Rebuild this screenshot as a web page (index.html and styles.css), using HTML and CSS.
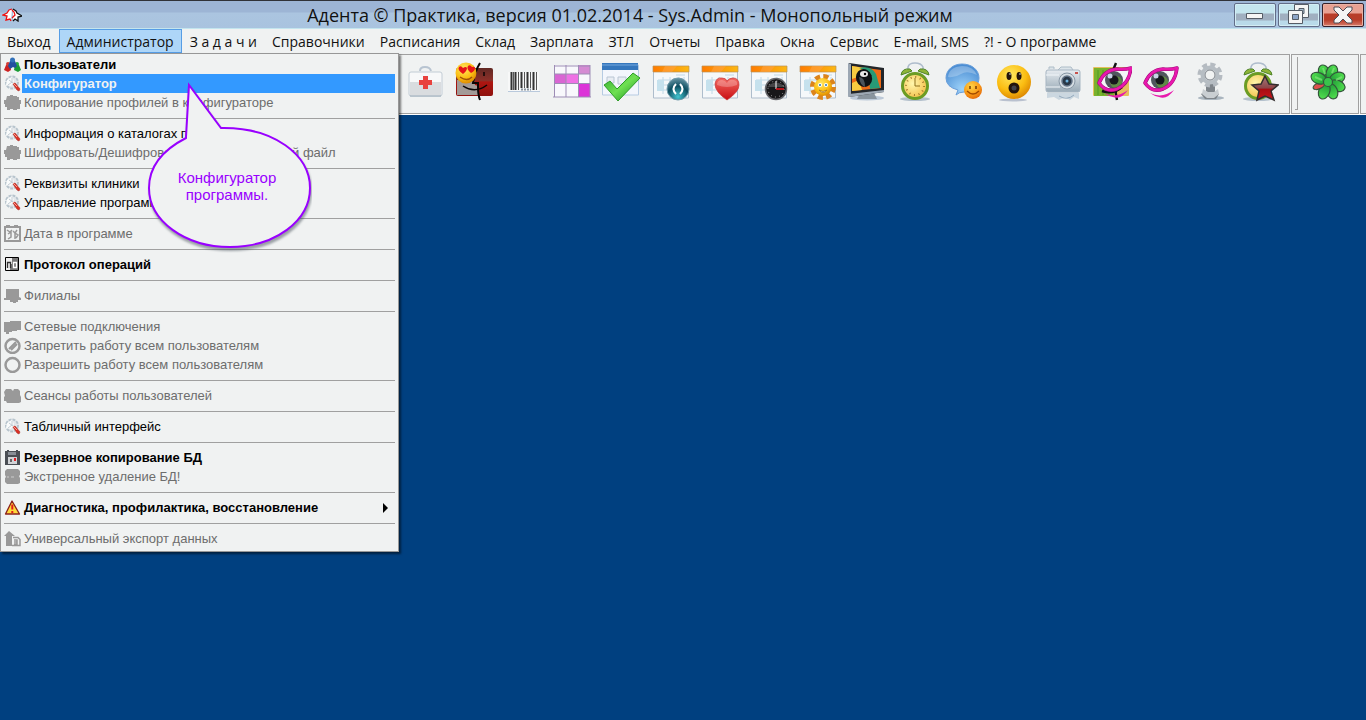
FILE: index.html
```html
<!DOCTYPE html>
<html lang="ru">
<head>
    <meta charset="UTF-8">
    <meta name="viewport" content="width=device-width, initial-scale=1.0">
    <title>Адента © Практика</title>
    <link rel="stylesheet" href="styles.css">
</head>
<body>
    <svg class="defs" aria-hidden="true">
        <defs>
            <radialGradient id="yellow" cx=".4" cy=".3" r=".75"><stop offset="0" stop-color="#ffe860"/><stop offset=".6" stop-color="#fbbd12"/><stop offset="1" stop-color="#d98200"/></radialGradient>
            <radialGradient id="amber" cx=".4" cy=".3" r=".75"><stop offset="0" stop-color="#ffd445"/><stop offset=".6" stop-color="#f99a18"/><stop offset="1" stop-color="#e06408"/></radialGradient>
            <linearGradient id="orange"><stop offset="0" stop-color="#ff7b00"/><stop offset="1" stop-color="#fcb813"/></linearGradient>
            <linearGradient id="silver" x2="0" y2="1"><stop offset="0" stop-color="#e6ebf0"/><stop offset="1" stop-color="#98a9b5"/></linearGradient>
            <linearGradient id="red" x2="0" y2="1"><stop offset="0" stop-color="#f46a62"/><stop offset="1" stop-color="#c80d12"/></linearGradient>
            <linearGradient id="darkred" x2="0" y2="1"><stop offset="0" stop-color="#612823"/><stop offset=".45" stop-color="#8d3029"/><stop offset=".5" stop-color="#ae1510"/><stop offset="1" stop-color="#8f120e"/></linearGradient>
            <linearGradient id="star" x2="0" y2="1"><stop offset="0" stop-color="#a5797b"/><stop offset=".5" stop-color="#8d4548"/><stop offset=".55" stop-color="#a80d12"/><stop offset="1" stop-color="#c8141a"/></linearGradient>
            <linearGradient id="green" x2="1" y2="1"><stop offset="0" stop-color="#2fa82b"/><stop offset=".5" stop-color="#6fe052"/><stop offset="1" stop-color="#128c18"/></linearGradient>
            <linearGradient id="petal" x2="0" y2="1"><stop offset="0" stop-color="#52e04f"/><stop offset="1" stop-color="#1d9a36"/></linearGradient>
            <radialGradient id="dial" cx=".4" cy=".4" r=".7"><stop offset="0" stop-color="#fff7ad"/><stop offset="1" stop-color="#f2b93c"/></radialGradient>
            <radialGradient id="blue" cx=".5" cy=".8" r=".9"><stop offset="0" stop-color="#9fd3f9"/><stop offset="1" stop-color="#3a80cc"/></radialGradient>
            <radialGradient id="teal" cx=".5" cy=".85" r=".8"><stop offset="0" stop-color="#43c4cf"/><stop offset=".6" stop-color="#0d4e61"/><stop offset="1" stop-color="#5d8c9c"/></radialGradient>
        </defs>
        <symbol id="wrench" viewBox="0 0 17 17">
            <circle cx="8" cy="7.500" r="6" fill="#e3e7ea" stroke="#b7c4cd" stroke-width="2" stroke-dasharray="3 1"/>
            <path d="M3 5l5-3 2 4-3 5-5-1z" fill="#f9fbfb"/>
            <path d="M5 5l4 3M8 3v5M4 10l4-3" stroke="#c3ccd3" fill="none"/>
            <path d="M9 9l2-1 5 6-1 2-2-1z" fill="#dc3024" stroke="#a72a23" stroke-width=".6"/>
            <path d="M9 8l4 4" stroke="#ff9d8d"/>
        </symbol>
        <symbol id="blob" viewBox="0 0 17 17"><path d="M3 2h3V1h3v1h4v1h2v3h2v4h-1v5h-3v1H9v-1H6v1H3v-3H1v-3H0V6h2z" fill="#999"/></symbol>
        <symbol id="calendar" viewBox="0 0 41 41">
            <path d="M3.500 5v31h35V5" fill="#f5f8fa" stroke="#aebdcc"/>
            <path d="M8 18h13M8 23h13M8 28h13M13 15v17M20 15v17M26 13h9M29 15v13M34 15v13" stroke="#c0d8e6" fill="none"/>
            <path d="M7 18h7v11H7z" fill="#c5e1ed"/>
            <path d="M3 4h36v6H3z" fill="url(#orange)" stroke="#b9925a" stroke-width=".7"/>
            <path d="M15 4h12l-5 6H12z" fill="#ffa34b" opacity=".5"/>
        </symbol>
        <symbol id="alarm" viewBox="0 0 41 41">
            <ellipse cx="20" cy="37" rx="15" ry="2" fill="#b4c1cd"/>
            <path d="M13 8V5q1-4 7-4t8 4v3" fill="none" stroke="#aebccc" stroke-width="1.500"/>
            <path d="M6 13q1-7 9-6l2 2zM34 13q-1-7-9-6l-2 2z" fill="#8eb437" stroke="#4e8428"/>
            <circle cx="20" cy="24" r="12.500" fill="url(#dial)" stroke="#6b9c24" stroke-width="3"/>
        </symbol>
        <symbol id="eye" viewBox="0 0 41 41">
            <path d="M5 21Q10 9 24 8q7 1 13-2-2 16-15 21Q12 31 5 21z" fill="#f4f4f7"/>
            <circle cx="20" cy="18" r="9" fill="#50565e"/>
            <circle cx="22" cy="20" r="6" fill="#5f8a45"/>
            <circle cx="20" cy="18" r="4.500" fill="#15181c"/>
            <circle cx="16" cy="14" r="2.500" fill="#c9d2e8"/>
            <path d="M5 21Q10 8 23 7q7 1 14-1-2 16-14 21Q12 31 5 21z" fill="none" stroke="#a00778" stroke-width="3.500" stroke-linejoin="round"/>
            <path d="M5 21Q10 8 23 7q7 1 14-1-2 16-14 21Q12 31 5 21z" fill="none" stroke="#e818ad" stroke-width="2.500" stroke-linejoin="round"/>
            <path d="M10 31q12 6 24-3-7 10-15 7-5-1-9-4z" fill="#e71aac"/>
        </symbol>
    </svg>

    <header class="titlebar">
        <svg class="logo" viewBox="0 0 20 14" aria-hidden="true">
            <path d="M10 1L7 2 5 5 1 7l4 1-1 4 4-1 1 2" fill="#fff" stroke="#e11" stroke-width="1.300"/>
            <path d="M11 1l3 2 1 2 5 3-4 1v4l-3-2-2 2" fill="#fff" stroke="#111" stroke-width="1.300"/>
            <path d="M10 2l2 2 1 3-3 3" fill="none" stroke="#e11" stroke-width="1.300"/>
        </svg>
        <h1>Адента © Практика, версия 01.02.2014 - Sys.Admin - Монопольный режим</h1>
        <div class="window-buttons">
            <button aria-label="Свернуть"><svg viewBox="0 0 40 22"><path d="M11.500 9.500h16v5h-16z" fill="#f5f5f5" stroke="#555c66"/></svg></button>
            <button aria-label="Восстановить"><svg viewBox="0 0 40 22"><path d="M15.500 .500h14v13h-14z" fill="#f5f5f5" stroke="#555c66"/><path d="M20 4.500h5v5h-5z" fill="#a7bdd0" stroke="#555c66"/><path d="M9.500 6.500h14v13h-14z" fill="#f5f5f5" stroke="#555c66"/><path d="M13.500 10.500h6v5h-6z" fill="#8ea6c8" stroke="#555c66"/></svg></button>
            <button class="close" aria-label="Закрыть"><svg viewBox="0 0 40 22"><path d="M11 3h5l4 4 4-4h5v3l-5 5 5 5v3h-5l-4-4-4 4h-5v-3l5-5-5-5z" fill="#f5f5f5" stroke="#514c55"/></svg></button>
        </div>
    </header>

    <nav class="menubar">
        <button>Выход</button>
        <button class="active" aria-expanded="true">Администратор</button>
        <button>З а д а ч и</button>
        <button>Справочники</button>
        <button>Расписания</button>
        <button>Склад</button>
        <button>Зарплата</button>
        <button>ЗТЛ</button>
        <button>Отчеты</button>
        <button>Правка</button>
        <button>Окна</button>
        <button>Сервис</button>
        <button>E-mail, SMS</button>
        <button>?! - О программе</button>

        <div class="dropdown">
            <ul>
                <li><button class="bold"><svg viewBox="0 0 17 17"><path d="M0 14l2-5h4l1 5-3 2z" fill="#c22"/><circle cx="4" cy="8" r="2" fill="#d43c35"/><path d="M10 14l1-5h4l2 5-3 2z" fill="#1a9b35"/><circle cx="13" cy="8" r="2" fill="#27a943"/><path d="M4 10l2-5h5l2 5-2 2-2-1-3 2z" fill="#234f9f"/><circle cx="8.500" cy="4" r="2.500" fill="#3271b9"/></svg><span>Пользователи</span></button></li>
                <li><button class="bold selected"><svg><use href="#wrench"/></svg><span>Конфигуратор</span></button></li>
                <li><button disabled><svg><use href="#blob"/></svg><span>Копирование профилей в конфигураторе</span></button></li>
            </ul>
            <ul>
                <li><button><svg><use href="#wrench"/></svg><span>Информация о каталогах программы</span></button></li>
                <li><button disabled><svg><use href="#blob"/></svg><span>Шифровать/Дешифровать любой выбранный файл</span></button></li>
            </ul>
            <ul>
                <li><button><svg><use href="#wrench"/></svg><span>Реквизиты клиники</span></button></li>
                <li><button><svg><use href="#wrench"/></svg><span>Управление программой</span></button></li>
            </ul>
            <ul>
                <li><button disabled><svg viewBox="0 0 17 17"><path d="M1 2h2V1h2v1h6V1h2v1h3v14H1z" fill="none" stroke="#999" stroke-width="2"/><path d="M3 5l3 2 2-2M4 9l3-2v5l-3 2M9 6l2 2v6M13 5l-2 3 3 2-2 3" fill="none" stroke="#999" stroke-width="1.500"/></svg><span>Дата в программе</span></button></li>
            </ul>
            <ul>
                <li><button class="bold"><svg viewBox="0 0 17 17"><path d="M1.500 1.500h13v13h-13z" fill="#eee" stroke="#000"/><path d="M8 2h6v12H6V8h2z" fill="#777"/><path d="M3 6.500h3.500V12M3.500 6v6" fill="none" stroke="#333" stroke-width="1.300"/><path d="M9.500 6.500h3v5h-3z" fill="none" stroke="#fff" stroke-width="1.300"/></svg><span>Протокол операций</span></button></li>
            </ul>
            <ul>
                <li><button disabled><svg viewBox="0 0 17 17"><path d="M2 2h13v8l2 1v2h-3v2h-2v1H9v-1H6v-2H0v-2h2z" fill="#999"/></svg><span>Филиалы</span></button></li>
            </ul>
            <ul>
                <li><button disabled><svg viewBox="0 0 17 17"><path d="M0 4h6V3h11v9h-4v1H8v1H5v2H2v-2H0z" fill="#999"/></svg><span>Сетевые подключения</span></button></li>
                <li><button disabled><svg viewBox="0 0 17 17"><circle cx="8.500" cy="9" r="7" fill="none" stroke="#999" stroke-width="2.500"/><path d="M5 12l7-7M7 13l6-6" stroke="#999" stroke-width="2"/></svg><span>Запретить работу всем пользователям</span></button></li>
                <li><button disabled><svg viewBox="0 0 17 17"><circle cx="8.500" cy="9" r="7" fill="none" stroke="#999" stroke-width="2.500"/></svg><span>Разрешить работу всем пользователям</span></button></li>
            </ul>
            <ul>
                <li><button disabled><svg viewBox="0 0 17 17"><path d="M2 2h5l2 2 1-2h4l2 2v4l1 2v5l-2 1H3l-1-2H0v-4l1-1-1-4z" fill="#999"/></svg><span>Сеансы работы пользователей</span></button></li>
            </ul>
            <ul>
                <li><button><svg><use href="#wrench"/></svg><span>Табличный интерфейс</span></button></li>
            </ul>
            <ul>
                <li><button class="bold"><svg viewBox="0 0 17 17"><path d="M1 2h2V1h2v1h7V1h2v1h2v14H1z" fill="#4a4e54"/><path d="M4 3h8v3H4z" fill="#888e96"/><path d="M4 8h9v7H4z" fill="#d1d3d6"/><path d="M6 10h2v3H6z" fill="#666"/><path d="M10 9h2v3h-2z" fill="#e01b23"/></svg><span>Резервное копирование БД</span></button></li>
                <li><button disabled><svg viewBox="0 0 17 17"><path d="M3 1h11l2 2v4l-1 1 1 2v5l-2 1H3l-2-2v-4l1-1-1-2V3z" fill="#999"/><path d="M4 8v2M7 9h3" stroke="#ccc"/></svg><span>Экстренное удаление БД!</span></button></li>
            </ul>
            <ul>
                <li><button class="bold"><svg viewBox="0 0 17 17"><path d="M8 2L1.500 15h14z" fill="#ffd83b" stroke="#8a211b" stroke-width="1.300" stroke-linejoin="round"/><path d="M8.300 5.500v5M8.300 12v2" stroke="#df1c1c" stroke-width="2"/></svg><span>Диагностика, профилактика, восстановление</span><i class="arrow"></i></button></li>
            </ul>
            <ul>
                <li><button disabled><svg viewBox="0 0 17 17"><path d="M5 1l6 5H8v10H2V6H0z" fill="#999"/><path d="M9 7.500h5l2 2v6H8M10 10h3v4h-3M10 12h3" fill="none" stroke="#999" stroke-width="1.500"/></svg><span>Универсальный экспорт данных</span></button></li>
            </ul>
        </div>

        <div class="callout">
            <svg viewBox="0 0 170 174" aria-hidden="true">
                <path d="M44 56Q7 75 7 106C7 139 43 165 88 165S168 139 168 106 132 45 79 46L47 3 44 55z"/>
            </svg>
            <p>Конфигуратор программы.</p>
        </div>
    </nav>

    <div class="toolbar">
        <div class="panel main">
            <button aria-label="Аптечка"><svg viewBox="0 0 41 41">
                <path d="M15 9q0-4 5-4t6 4" fill="none" stroke="#b8c4d1" stroke-width="2"/>
                <rect x="4" y="10" width="33" height="24" rx="2" fill="#f7f8f9" stroke="#c2ccd5"/>
                <path d="M5 20h31v13H5z" fill="#d9dcdf"/>
                <path d="M5 34h31" stroke="#98a9b5"/>
                <path d="M18 14h5v4h4v5h-4v4h-5v-4h-4v-5h4z" fill="#e8423e"/>
            </svg></button>
            <button aria-label="Клиент"><svg viewBox="0 0 41 41">
                <rect x="2" y="6" width="37" height="28" rx="2" fill="url(#darkred)"/>
                <path d="M3 18h17l1 5 3 1v9H3z" fill="#a39b98"/>
                <path d="M26 1q-5 8-7 20h5v4q0 8 2 13" fill="none" stroke="#0b0505" stroke-width="2"/>
                <path d="M9 24q12 8 24-1M30 10v4" fill="none" stroke="#0b0505" stroke-width="1.500"/>
                <circle cx="12" cy="11" r="10.500" fill="url(#yellow)"/>
                <path d="M9 12Q3 8 5 5q2-2 4 1 3-2 4 0 0 3-4 6zM17 11q-5-4-3-7 2-2 4 1 3-1 3 1 0 3-4 5z" fill="#e51517"/>
                <path d="M6 15q7 5 12 0" fill="none" stroke="#a05208" stroke-width="1.500"/>
            </svg></button>
            <button aria-label="Штрих-код"><svg viewBox="0 0 41 41">
                <path d="M5 10h31v20H5z" fill="#f7f8f8"/>
                <path d="M8.500 10v18M12.500 10v18M18.500 10v16M24.500 10v16M30.500 10v18" stroke="#333" stroke-width="2"/>
                <path d="M10.500 10v18M15.500 10v18M21.500 10v16M27.500 10v16M33.500 10v18" stroke="#555"/>
                <path d="M5 29.500h32" stroke="#b9c9dc"/><path d="M18 27.500h10" stroke="#8a949e" stroke-width="2" stroke-dasharray="2 1"/>
            </svg></button>
            <button aria-label="Таблица"><svg viewBox="0 0 41 41">
                <path d="M2 3h36v32H2z" fill="#f8f8fc"/>
                <path d="M2 12h24v9H2z" fill="#ef71e5"/><path d="M2 12h12v9H2z" fill="#d966d3"/>
                <path d="M27 3h11v9H27z" fill="#d58bd3"/><path d="M27 22h11v13H27z" fill="#dc34d8"/>
                <path d="M2 4h36M2 12h36M2 21.500h36M1 35h38M2.500 3v32M14 3v32M26.500 3v32M38 3v32" stroke="#9d8db5" fill="none"/>
            </svg></button>
            <button aria-label="Готово"><svg viewBox="0 0 41 41">
                <path d="M1.500 3h36v30h-36z" fill="#f3f6fc" stroke="#b6cbe2"/>
                <path d="M1 1h36v7H1z" fill="#3577bd"/><path d="M1 3h36" stroke="#74a8dd"/>
                <path d="M6 15h7v6H6zM17 15h8v7h-8zM28 15h6v6h-6z" fill="#e9edf3" stroke="#b9c6d4"/>
                <path d="M3 23l6-4 7 8L32 11l7 5-22 23z" fill="url(#green)" stroke="#2d9d27"/>
            </svg></button>
            <button aria-label="Расписание"><svg viewBox="0 0 41 41">
                <use href="#calendar"/><circle cx="28" cy="27" r="11" fill="url(#teal)" stroke="#729cab"/>
                <path d="M26 22q-5 5 0 10M30 22q5 5 0 10" fill="none" stroke="#fff" stroke-width="2"/>
            </svg></button>
            <button aria-label="Избранное"><svg viewBox="0 0 41 41">
                <use href="#calendar"/><path d="M28 38Q16 30 16 22q1-7 7-6 4 0 5 3 2-3 6-3 6 0 6 7 0 7-12 15z" fill="url(#red)" stroke="#c93536" stroke-width=".7"/>
                <path d="M18 23q0-5 5-5 3 0 5 3 2-4 7-3 4 1 3 5-10 4-20 0z" fill="#fff" opacity=".25"/>
            </svg></button>
            <button aria-label="Время"><svg viewBox="0 0 41 41">
                <use href="#calendar"/><circle cx="28" cy="27" r="10.500" fill="#171719" stroke="#66676b" stroke-width="1.500"/>
                <circle cx="28" cy="27" r="8" fill="none" stroke="#aaa" stroke-dasharray="1 3.200"/>
                <path d="M19 25q9-9 18 0z" fill="#fff" opacity=".2"/>
                <path d="M28 19v8" stroke="#fff"/><path d="M28 27h8" stroke="#e6141b" stroke-width="1.500"/>
            </svg></button>
            <button aria-label="Солнце"><svg viewBox="0 0 41 41">
                <use href="#calendar"/>
                <circle cx="26" cy="25" r="10.500" fill="none" stroke="#dc841c" stroke-width="5" stroke-dasharray="5 3.250"/>
                <circle cx="26" cy="25" r="9" fill="url(#yellow)"/>
                <circle cx="23" cy="23" r="2" fill="#fff"/><circle cx="29" cy="23" r="2" fill="#fff"/>
                <circle cx="23" cy="23" r="1" fill="#2577b0"/><circle cx="29" cy="23" r="1" fill="#2577b0"/>
                <path d="M22 28q4 3 8 0-4 5-8 0z" fill="#fff" stroke="#a66e13" stroke-width=".7"/>
            </svg></button>
            <button aria-label="Монитор"><svg viewBox="0 0 41 41">
                <ellipse cx="21" cy="36" rx="17" ry="2.500" fill="#bcc9d8"/><path d="M14 31h14l3 6H11z" fill="#89949e"/>
                <path d="M3 1l35 5v24L3 35z" fill="#22262b"/><path d="M2 1l3 1v32l-3 1zM3 32l35-4v2L3 35z" fill="#9ca7b3"/>
                <path d="M6 4l29 4v18L6 29z" fill="#ed6a16"/><path d="M6 4l12 2-6 9-6 2zM6 21l7-3 3 10-10 1z" fill="#f8cc40"/>
                <path d="M13 6q12-3 17 6l4 14-10 1-1-12q-2-7-10-9z" fill="#279a76"/>
                <ellipse cx="18" cy="16" rx="8" ry="9" fill="#101316" transform="rotate(-20 18 16)"/>
                <ellipse cx="18" cy="12" rx="4" ry="3" fill="#e9e9e9"/><circle cx="19" cy="12" r="1.200"/><path d="M13 15q6 0 6 10-5-2-6-10z" fill="#4c535a"/>
            </svg></button>
            <button aria-label="Будильник"><svg viewBox="0 0 41 41">
                <use href="#alarm"/><circle cx="20" cy="24" r="9" fill="none" stroke="#9f7429" stroke-width="2" stroke-dasharray="1 3.710"/>
                <path d="M20 16v8h5" fill="none" stroke="#8d711d"/>
            </svg></button>
            <button aria-label="Сообщения"><svg viewBox="0 0 41 41">
                <path d="M18 2c10 0 17 6 17 14S28 29 20 30q-5 0-8 3l2-5Q2 25 2 16C2 8 9 2 18 2z" fill="url(#blue)" stroke="#689eda"/>
                <path d="M4 15Q5 5 18 4q11 0 15 9-10-5-16-1T4 15z" fill="#fff" opacity=".25"/>
                <circle cx="29" cy="28" r="9" fill="url(#amber)"/><path d="M26 24v3M32 24v3" stroke="#713a05" stroke-width="1.500"/><path d="M23 29q6 6 12 0" fill="none" stroke="#a04a00" stroke-width="1.300"/>
            </svg></button>
            <button aria-label="Удивление"><svg viewBox="0 0 41 41">
                <ellipse cx="20" cy="38" rx="14" ry="1.500" fill="#b9c1cf"/>
                <circle cx="21" cy="20" r="17" fill="url(#yellow)"/><ellipse cx="16" cy="14" rx="2.500" ry="4" fill="#25150b"/><ellipse cx="26" cy="14" rx="2.500" ry="4" fill="#25150b"/>
                <circle cx="21" cy="26" r="5.500" fill="#24150c"/><circle cx="21" cy="26" r="2.500" fill="#40424a"/><circle cx="17" cy="12" r="1" fill="#999"/><circle cx="27" cy="12" r="1" fill="#999"/>
            </svg></button>
            <button aria-label="Камера"><svg viewBox="0 0 41 41">
                <path d="M5 31h32v6l-5-2-4 3-5-3-6 3-5-3-7 1z" fill="#cbd7e0"/>
                <path d="M7 7V5h5v2M16 8l3-3h10l2 3" fill="#dce4e9" stroke="#aebdc8"/>
                <rect x="4" y="8" width="34" height="22" rx="2" fill="url(#silver)" stroke="#a6b5c2"/><path d="M4 13h13M4 25h14" stroke="#f2f6fa"/>
                <circle cx="25" cy="19" r="8" fill="#d5dde3" stroke="#8897a5"/><circle cx="25" cy="19" r="5" fill="#293746" stroke="#637386" stroke-width="1.500"/><circle cx="25" cy="19" r="1.500" fill="#6db2df"/><path d="M33 10h3v2h-3z" fill="#c7524d"/>
                <path d="M17 34q8 5 15-1" fill="none" stroke="#93a9bc"/>
            </svg></button>
            <button aria-label="Просмотр"><svg viewBox="0 0 41 41">
                <rect x="2" y="5" width="36" height="29" rx="1" fill="#e6bf5c"/><path d="M3 6h20v28H3z" fill="#79b22d"/><path d="M7 8v25M12 8v25M18 8v25" stroke="#4f9a24"/>
                <path d="M25 1q-5 10-4 23h4q-1 7 1 14M11 29q11 4 20-4" fill="none" stroke="#111" stroke-width="2.500"/>
                <svg x="3" y="0" width="34" height="33"><use href="#eye"/></svg>
            </svg></button>
            <button aria-label="Глаз"><svg viewBox="0 0 41 41"><use href="#eye"/></svg></button>
            <button aria-label="Настройка"><svg viewBox="0 0 41 41">
                <ellipse cx="22" cy="36" rx="13" ry="2" fill="#a9b4be"/>
                <path d="M17 19h9v10l4 3-3 5H16l-4-5 5-3z" fill="#7e848a"/><path d="M14 27l5 3h6l4-3 1 5-5 4h-7l-5-4z" fill="#c9ced2"/>
                <circle cx="21" cy="13" r="9.500" fill="none" stroke="#b5bbc1" stroke-width="6" stroke-dasharray="4.500 2.960"/>
                <circle cx="21" cy="13" r="7.500" fill="#eff0f1" stroke="#b6bdc3" stroke-width="4"/><circle cx="21" cy="13" r="5" fill="#f0f2f2" stroke="#7b8188" stroke-width="1"/>
            </svg></button>
            <button aria-label="Напоминание"><svg viewBox="0 0 41 41">
                <use href="#alarm"/><path d="M27 14l4 8 9 1-7 6 3 9-9-4-8 4 2-9-7-6 9-1z" fill="url(#star)" stroke="#332d2e" stroke-width="1.500"/>
            </svg></button>
        </div>
        <div class="panel icq">
            <span class="grip"></span>
            <button aria-label="ICQ"><svg viewBox="0 0 41 41">
                <g fill="url(#petal)" stroke="#34563b" stroke-width="1.200">
                    <ellipse cx="20" cy="10" rx="5.500" ry="8" transform="rotate(-22 20 20)"/>
                    <ellipse cx="20" cy="10" rx="5.500" ry="8" transform="rotate(22 20 20)"/>
                    <ellipse cx="20" cy="10" rx="5.500" ry="8" transform="rotate(67 20 20)"/>
                    <ellipse cx="20" cy="10" rx="5.500" ry="8" transform="rotate(112 20 20)"/>
                    <ellipse cx="20" cy="10" rx="5.500" ry="8" transform="rotate(157 20 20)"/>
                    <ellipse cx="20" cy="10" rx="5.500" ry="8" transform="rotate(202 20 20)"/>
                    <ellipse cx="20" cy="10" rx="3" ry="6" fill="#dd504d" transform="rotate(247 20 20)"/>
                    <ellipse cx="20" cy="10" rx="5.500" ry="8" transform="rotate(292 20 20)"/>
                    <circle cx="20" cy="20" r="4.500" fill="#39c44b"/>
                </g>
                <path d="M15 6l2 6M26 6l-2 5M7 15l7 3M34 15l-6 3" stroke="#82e879" stroke-width="2" opacity=".7"/>
            </svg></button>
        </div>
        <div class="panel rest"></div>
    </div>

    <main class="desktop"></main>
</body>
</html>
```

FILE: styles.css
```css
* {
    box-sizing: border-box;
}
body {
    margin: 0;
    min-height: 100vh;
    display: flex;
    flex-direction: column;
    background: #004080;
    font-family: "Liberation Sans", Arial, sans-serif;
}
button {
    border: none;
    padding: 0;
    margin: 0;
    background: none;
    font: inherit;
    color: inherit;
}
svg {
    display: block;
}
.defs {
    position: absolute;
    width: 0;
    height: 0;
}

/* title bar */
.titlebar {
    display: flex;
    align-items: center;
    height: 29px;
    padding: 0 2px;
    border-top: 1px solid #303238;
    border-bottom: 1px solid #c4e5ee;
    background: linear-gradient(#9db5d5 11px, #abc5e0 12px, #a9c3df);
}
.logo {
    width: 20px;
    height: 14px;
}
.titlebar h1 {
    flex: 1;
    margin: 0;
    padding-left: 4px;
    text-align: center;
    font: 18px/26px "Open Sans", "Noto Sans", sans-serif;
    color: #111;
    white-space: nowrap;
}
.window-buttons {
    display: flex;
    gap: 2px;
}
.window-buttons button {
    width: 42px;
    height: 24px;
    border: 1px solid #626d88;
    border-radius: 2px;
    background: linear-gradient(#c4e5ee 9px, #a0afc0 10px, #a0afc0 16px, #b9dae9 17px);
    box-shadow: inset 0 0 0 1px #d3edf4;
}
.window-buttons .close {
    border-color: #35202a;
    background: linear-gradient(#e8a193 9px, #b83d29 10px, #b83d29 16px, #d77d6c);
    box-shadow: inset 0 0 0 1px #eab0a2;
}
.window-buttons svg {
    width: 40px;
    height: 22px;
}

/* menu bar */
.menubar {
    position: relative;
    display: flex;
    gap: 1px;
    height: 25px;
    background: #f0f2f2;
    font: 14px/25px "Open Sans", "Noto Sans", sans-serif;
    color: #111;
}
.menubar > button {
    height: 24px;
    padding: 0 7px;
    white-space: nowrap;
}
.menubar > .active {
    padding: 0 7px;
    border: 1px solid #569de5;
    background: #aed6f8;
    line-height: 23px;
}

.dropdown {
    position: absolute;
    top: 24px;
    left: 0;
    z-index: 2;
    width: 399px;
    padding: 1px 3px 3px 3px;
    border: 1px solid #979797;
    background: #f0f2f2;
    box-shadow: 2px 2px 2px rgba(0, 0, 0, 0.5);
    font: 13px/19px "Liberation Sans", Arial, sans-serif;
    color: #000;
}
.dropdown ul {
    margin: 0;
    padding: 0;
    list-style: none;
}
.dropdown ul + ul {
    margin-top: 6px;
    padding-top: 5px;
    border-top: 1px solid #a0a0a0;
}
.dropdown button {
    display: flex;
    align-items: center;
    gap: 1px;
    width: 100%;
    height: 19px;
    text-align: left;
    white-space: nowrap;
}
.dropdown svg {
    width: 17px;
    height: 17px;
}
.dropdown span {
    flex: 1;
    padding-left: 2px;
}
.dropdown .bold {
    font-weight: bold;
}
.dropdown .selected span {
    background: #3399ff;
    color: #f0f2f2;
}
.dropdown button:disabled {
    color: #6d6d6d;
}
.arrow {
    margin-right: 7px;
    border: 5px solid transparent;
    border-left-color: #000;
    border-right: none;
}

/* hint over the menu */
.callout {
    position: absolute;
    top: 53px;
    left: 142px;
    z-index: 3;
    width: 170px;
    height: 174px;
}
.callout path {
    fill: #f0f2f2;
    stroke: #9900ff;
    stroke-width: 2;
    filter: drop-shadow(1px 3px 1px rgba(70, 80, 90, 0.5));
}
.callout p {
    position: absolute;
    top: 87px;
    left: 30px;
    width: 110px;
    margin: 0;
    text-align: center;
    font: 15px/17px "Liberation Sans", Arial, sans-serif;
    color: #9900ff;
}

/* toolbar */
.toolbar {
    display: flex;
    gap: 1px;
    height: 61px;
    background: #f7f9f9;
    border-bottom: 1px solid #fff;
}
.panel {
    display: flex;
    align-items: center;
    padding-bottom: 4px;
    border: 1px solid #a0a0a0;
    background: #f0f2f2;
}
.panel.main {
    flex: 1;
    padding-left: 401px;
    border-left: none;
}
.panel.icq {
    width: 68px;
}
.panel.rest {
    width: 6px;
    border-right: none;
}
.panel button {
    flex: none;
    width: 49px;
    padding: 0 4px;
}
.panel svg {
    width: 41px;
    height: 41px;
}
.grip {
    width: 3px;
    height: 53px;
    margin: 2px 6px 0 3px;
    border: solid #a0a0a0;
    border-width: 0 1px 1px 0;
}
.desktop {
    flex: 1;
}
```
